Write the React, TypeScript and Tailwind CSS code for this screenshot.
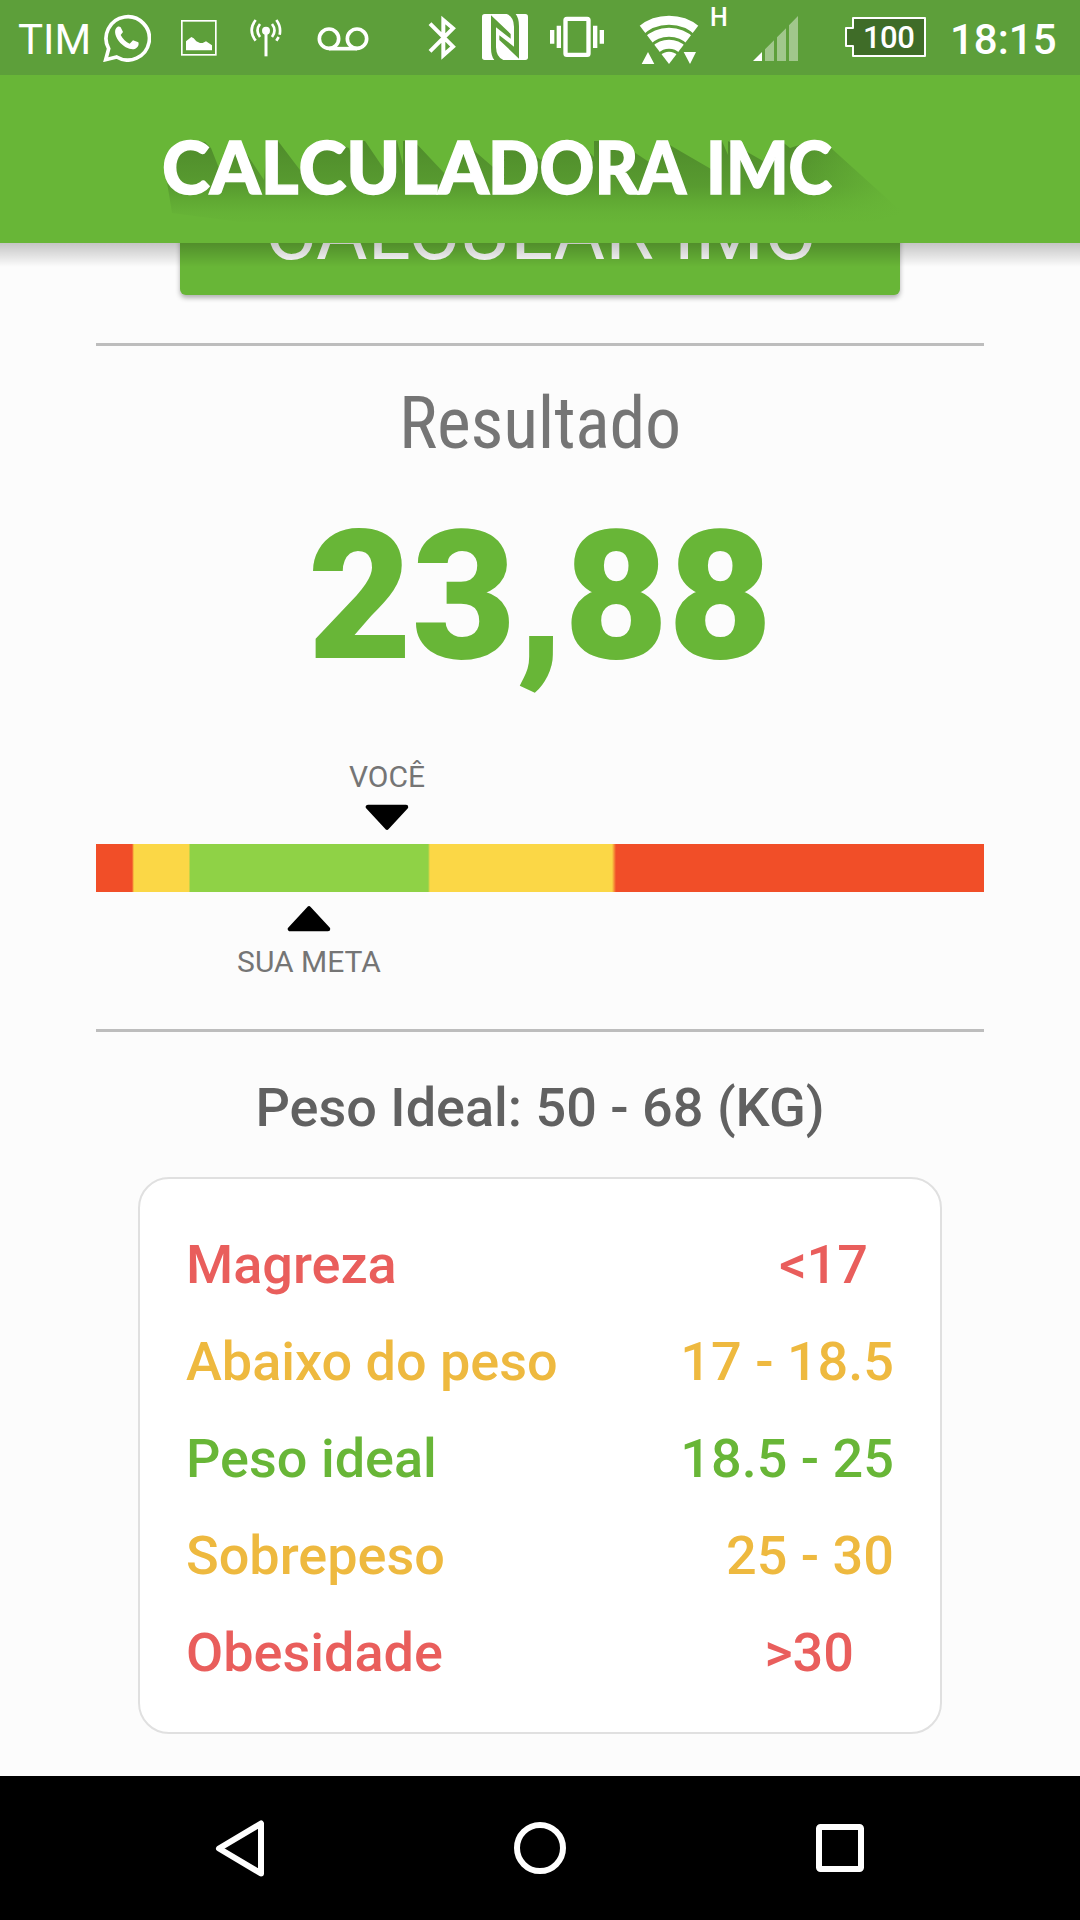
import type { ReactNode } from "react";

type IconProps = {
    viewBox: string;
    className: string;
    children: ReactNode;
};

type Range = {
    label: string;
    value: string;
    color: string;
    // narrow values are not flush with the right edge
    inset?: string;
};

const ranges: Range[] = [
    { label: "Magreza", value: "<17", color: "text-[#e95e5c]", inset: "pr-[26px]" },
    { label: "Abaixo do peso", value: "17 - 18.5", color: "text-[#eeb93f]" },
    { label: "Peso ideal", value: "18.5 - 25", color: "text-[#68b637]" },
    { label: "Sobrepeso", value: "25 - 30", color: "text-[#eeb93f]" },
    { label: "Obesidade", value: ">30", color: "text-[#e95e5c]", inset: "pr-[40px]" },
];

function Icon({ viewBox, className, children }: IconProps) {
    return (
        <svg viewBox={viewBox} className={`shrink-0 ${className}`} fill="none" stroke="none">
            {children}
        </svg>
    );
}

function StatusBar() {
    return (
        <div className="flex h-[75px] items-start bg-[#5d9f3a] text-white">
            <span className="ml-[18px] mt-[15px] w-[85px] text-[42px] leading-[49px]">TIM</span>

            {/* WhatsApp */}
            <Icon viewBox="309 42 144 144" className="mt-[14px] size-[48px]">
                <path d="M317 179 L326 146 A65 65 0 1 1 350 171 Z" stroke="#fff" strokeWidth="11" strokeLinejoin="miter" />
                <path
                    d="M352 81 C342 88 343 105 356 123 C371 142 391 150 404 147 C413 144 418 135 415 127 L399 121 L389 131 C378 127 368 116 362 105 L369 96 L362 82 C359 79 355 79 352 81 Z"
                    fill="#fff"
                />
            </Icon>

            {/* Screenshot */}
            <Icon viewBox="543 60 108 108" className="ml-[30px] mt-[20px] size-[36px]">
                <rect x="545.5" y="62.5" width="102" height="102" stroke="#fff" strokeWidth="5" />
                <path d="M558 151 V124 L574 111 L581 115 L589 124 L600 129 H608 L618 124 L636 136 V151 Z" fill="#fff" />
            </Icon>

            {/* Antenna */}
            <Icon viewBox="750 57 96 114" className="ml-[33px] mt-[19px] h-[38px] w-[32px]">
                <path d="M798 92 V169" stroke="#fff" strokeWidth="9" />
                <circle cx="798" cy="92" r="12" fill="#fff" />
                <path d="M780 72 Q765 91 780 111 M816 72 Q831 91 816 111" stroke="#fff" strokeWidth="8" />
                <path d="M767 60 Q743 91 767 122 M829 60 Q844 80 839 104 M836 111 L829 122" stroke="#fff" strokeWidth="8" />
            </Icon>

            {/* Voicemail */}
            <Icon viewBox="951 78 156 78" className="ml-[35px] mt-[26px] h-[26px] w-[52px]">
                <circle cx="987" cy="116" r="29" stroke="#fff" strokeWidth="11" />
                <circle cx="1071" cy="116" r="29" stroke="#fff" strokeWidth="11" />
                <path d="M987 146 H1071" stroke="#fff" strokeWidth="11" />
            </Icon>

            {/* Bluetooth */}
            <Icon viewBox="144 45 84 135" className="ml-[59px] mt-[15px] h-[45px] w-[28px]">
                <path d="M150 71 L219 140 L190 166 V60 L219 85 L150 154" stroke="#fff" strokeWidth="12" />
            </Icon>

            {/* NFC */}
            <Icon viewBox="306 42 138 138" className="ml-[26px] mt-[14px] size-[46px]">
                <rect x="306" y="42" width="138" height="138" rx="8" fill="#fff" />
                <path d="M333 46 L392 102 V116 L348 82 V142 Q349 172 370 180 H343 Q333 168 333 143 Z" fill="#5d9f3a" />
                <path d="M417 176 L358 120 V106 L402 140 V80 Q401 50 380 42 H407 Q417 54 417 79 Z" fill="#5d9f3a" />
            </Icon>

            {/* Vibrate */}
            <Icon viewBox="510 48 162 126" className="ml-[22px] mt-[16px] h-[42px] w-[54px]">
                <rect x="556.5" y="56.5" width="69" height="108" rx="4" stroke="#fff" strokeWidth="13" />
                <path d="M516.5 90 V131 M536.5 77 V144 M645.5 77 V144 M665.5 90 V131" stroke="#fff" strokeWidth="13" />
            </Icon>

            {/* Wifi */}
            <Icon viewBox="777 45 180 150" className="ml-[35px] mt-[15px] h-[50px] w-[60px]">
                <clipPath id="wifi">
                    <path d="M867 192 L751 40 H983 Z" />
                </clipPath>
                <g clipPath="url(#wifi)" stroke="#fff" strokeWidth="27">
                    <circle cx="867" cy="192" r="37" fill="#fff" stroke="none" />
                    <circle cx="867" cy="192" r="59" />
                    <circle cx="867" cy="192" r="95" />
                    <circle cx="867" cy="192" r="131" />
                </g>
                <path d="M785 192 L804 156 L823 192 Z M911 156 H948 L930 192 Z" fill="#fff" />
            </Icon>
            <span className="ml-[11px] mt-[3px] w-[24px] text-[25px] leading-[29px] font-medium">H</span>

            {/* Signal */}
            <Icon viewBox="69 45 135 138" className="ml-[19px] mt-[15px] h-[46px] w-[45px]">
                <path d="M69 183 L96 156 V183 Z" fill="#fff" />
                <path d="M105 183 V148 L132 121 V183 Z M141 183 V112 L168 85 V183 Z M177 183 V76 L204 48 V183 Z" fill="#fff" fillOpacity="0.42" />
            </Icon>

            {/* Battery */}
            <div className="relative ml-[47px] mt-[17px] h-[40px] w-[81px]">
                <Icon viewBox="345 51 243 120" className="h-[40px] w-[81px]">
                    <path d="M369 54 H585 V168 H369 V138 H348 V84 H369 Z" fill="#3f6c28" stroke="#fff" strokeWidth="6" strokeLinejoin="round" />
                </Icon>
                <span className="absolute left-[18px] top-[3px] text-[31px] leading-[36px] font-medium tracking-[-0.5px]">100</span>
            </div>

            <span className="ml-[24px] mt-[15px] text-[42px] leading-[49px] font-medium">18:15</span>
        </div>
    );
}

function TitleBar() {
    return (
        <div className="h-[168px] bg-[#68b637]">
            <svg viewBox="0 75 1080 168" className="h-[168px] w-full">
                <defs>
                    <linearGradient id="fade-y" gradientUnits="userSpaceOnUse" x1="0" y1="140" x2="0" y2="224">
                        <stop offset="0" stopColor="#4f8b2b" />
                        <stop offset="0.55" stopColor="#589b30" />
                        <stop offset="0.72" stopColor="#60a933" />
                        <stop offset="0.85" stopColor="#65b136" />
                        <stop offset="1" stopColor="#68b637" />
                    </linearGradient>
                    <linearGradient id="fade-x" gradientUnits="userSpaceOnUse" x1="790" y1="0" x2="905" y2="0">
                        <stop offset="0" stopColor="#68b637" stopOpacity="0" />
                        <stop offset="1" stopColor="#68b637" />
                    </linearGradient>
                </defs>
                {/* long shadow behind the wordmark */}
                <path
                    d="M165 170 L172 150 L188 141 L205 142 L211 148 L222 176 L238 141 L264 180 L267 141 H278 L303 174 L306 155 L330 141 L349 148 L354 165 V141 H365 L386 172 V141 H397 L403 165 V141 H414 L446 175 L463 141 L493 167 V141 H515 L530 152 L541 160 L562 141 L585 148 L594 157 V141 H615 L631 150 L649 162 L661 140 L711 169 V141 H722 L728 155 V141 L763 161 L780 140 L790 148 L812 141 L831 148 L903 213 L870 222 L500 228 L240 222 L172 213 Z"
                    fill="url(#fade-y)"
                />
                <rect x="790" y="120" width="150" height="120" fill="url(#fade-x)" />
                <text
                    y="193.5"
                    className="fill-white stroke-white stroke-[1.4px] text-[73px] font-black [font-family:Lato,sans-serif] [font-kerning:none]"
                >
                    <tspan x="162" textLength="327" lengthAdjust="spacingAndGlyphs">CALCULA</tspan>
                    <tspan x="488" textLength="198" lengthAdjust="spacingAndGlyphs">DORA</tspan>{" "}
                    <tspan x="706" textLength="126" lengthAdjust="spacingAndGlyphs">IMC</tspan>
                </text>
            </svg>
        </div>
    );
}

function BmiScale() {
    return (
        <div>
            <div className="ml-[287px] flex w-[200px] flex-col items-center">
                <span className="text-[30px] leading-[35px] text-[#757575]">VOCÊ</span>
                <svg viewBox="0 0 44 26" className="mt-[10px] h-[26px] w-[44px]">
                    <path d="M3 3 H41 L22 23.5 Z" stroke="#000" strokeWidth="4.5" strokeLinejoin="round" />
                </svg>
            </div>
            <div className="mx-[96px] mt-[14px] h-[48px] bg-[linear-gradient(90deg,#f14e28_36px,#fbd746_38px,#fbd746_93px,#8fd246_94px,#8fd246_332px,#fbd746_334px,#fbd746_516px,#f14e28_520px)]" />
            <div className="ml-[209px] mt-[14px] flex w-[200px] flex-col items-center">
                <svg viewBox="0 0 44 26" className="h-[26px] w-[44px]">
                    <path d="M3 23 H41 L22 2.5 Z" stroke="#000" strokeWidth="4.5" strokeLinejoin="round" />
                </svg>
                <span className="mt-[12px] text-[30px] leading-[35px] text-[#757575]">SUA META</span>
            </div>
        </div>
    );
}

function NavBar() {
    return (
        <div className="flex h-[144px] items-center justify-between bg-black px-[208px]">
            <svg viewBox="0 0 64 64" className="size-[64px]" fill="none" stroke="#fff" strokeWidth="6" strokeLinejoin="round">
                <path d="M11 32.5 L53 7.5 V57.5 Z" />
            </svg>
            <svg viewBox="0 0 64 64" className="size-[64px]" fill="none" stroke="#fff" strokeWidth="6">
                <circle cx="32" cy="32" r="23" />
            </svg>
            <svg viewBox="0 0 64 64" className="size-[64px]" fill="none" stroke="#fff" strokeWidth="6">
                <rect x="11" y="11" width="42" height="42" rx="1.5" />
            </svg>
        </div>
    );
}

export default function App() {
    return (
        <div className="flex h-[1920px] w-[1080px] flex-col overflow-hidden bg-[#fcfcfc] [font-family:Roboto,sans-serif]">
            <StatusBar />
            <TitleBar />

            <main className="relative h-[1533px] overflow-hidden">
                {/* button scrolled halfway under the title bar */}
                <button className="mx-[180px] -mt-[92px] block h-[144px] w-[720px] rounded-[6px] bg-[#68b637] pt-[18px] text-[79px] leading-[116px] text-white shadow-[0_3px_5px_rgba(0,0,0,0.3)]">
                    CALCULAR IMC
                </button>
                <div className="pointer-events-none absolute inset-x-0 top-0 h-[24px] bg-linear-to-b from-black/22 to-transparent" />

                <hr className="mx-[96px] mt-[48px] h-[3px] border-0 bg-[#bdbdbd]" />
                <h2 className="mt-[36px] text-center text-[72px] leading-[84px] tracking-[-0.2px] text-[#757575] [font-family:'Roboto_Condensed',Roboto,sans-serif] [font-stretch:75%]">
                    Resultado
                </h2>
                <div className="mt-[26px] text-center text-[180px] leading-[210px] font-black tracking-[-0.3px] text-[#68b637]">23,88</div>

                <div className="mt-[57px]">
                    <BmiScale />
                </div>

                <hr className="mx-[96px] mt-[50px] h-[3px] border-0 bg-[#bdbdbd]" />
                <p className="mt-[44px] text-center text-[54px] leading-[64px] font-medium text-[#616161]">
                    Peso Ideal: 50 - 68 (KG)
                </p>

                <div className="mx-[138px] mt-[37px] h-[557px] rounded-[31px] border-2 border-[#e0e0e0] bg-white px-[46px] pt-[37px]">
                    {ranges.map(r => (
                        <div key={r.label} className={`flex h-[97px] items-center justify-between text-[54px] font-medium ${r.color}`}>
                            <span>{r.label}</span>
                            <span className={r.inset}>{r.value}</span>
                        </div>
                    ))}
                </div>
            </main>

            <NavBar />
        </div>
    );
}
